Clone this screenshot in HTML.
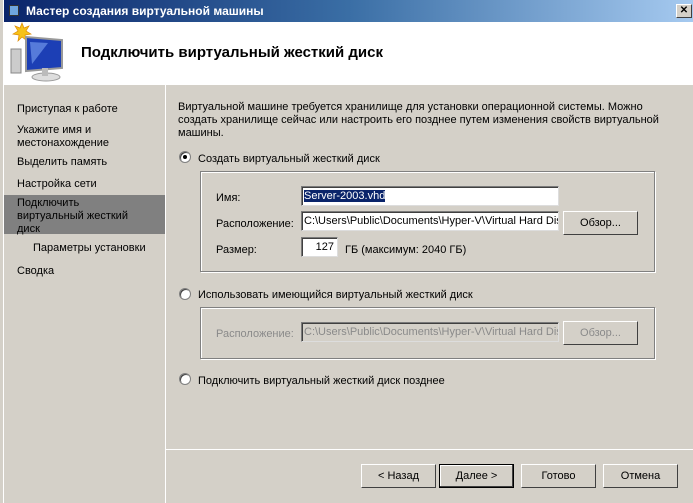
<!DOCTYPE html>
<html><head><meta charset="utf-8"><style>
*{margin:0;padding:0;box-sizing:border-box}
body{width:693px;height:503px;overflow:hidden;background:#d4d0c8;font-family:"Liberation Sans",sans-serif;font-size:11px;color:#000;position:relative}
.a{position:absolute}
.l{margin-top:2px}
.title{left:4px;top:0;width:689px;height:22px;background:linear-gradient(90deg,#0a246a 0%,#3a6ea5 50%,#a6caf0 100%);color:#fff;font-weight:bold;font-size:12px;line-height:22px;padding-left:22px}
.hdr{left:4px;top:22px;width:689px;height:63px;background:#fff}
.edge{left:3px;top:0;width:1px;height:503px;background:#fff}
.nav{left:4px;top:85px;width:161px;height:418px;background:#d4d0c8}
.vsep{left:165px;top:85px;width:1px;height:418px;background:#fff}
.hsep{left:166px;top:449px;width:527px;height:1px;background:#fff}
.nav .t{position:absolute;left:13px;line-height:13px;margin-top:2px}
.sel{position:absolute;left:0;top:110px;width:161px;height:39px;background:#808080}
.box{border:1px solid #808080;box-shadow:1px 1px 0 #fff inset,1px 1px 0 #fff}
.inp{background:#fff;border:1px solid #7a7a7a;border-right-color:#ddd;border-bottom-color:#ddd;height:20px;line-height:18px;padding-left:2px;white-space:nowrap;overflow:hidden;box-shadow:1px 1px 0 #404040 inset}
.btn{background:#d4d0c8;border:1px solid;border-color:#fff #404040 #404040 #fff;box-shadow:-1px -1px 0 #d4d0c8 inset,-1px -1px 0 #808080 inset;text-align:center;line-height:22px;height:24px}
.rad{width:12px;height:12px;border-radius:50%;background:#fff;border:1px solid #808080;box-shadow:1px 1px 0 #404040 inset}
.dis{color:#8a8a8a}
</style></head><body>
<div class="a edge"></div>
<div class="a title">Мастер создания виртуальной машины</div>
<div class="a" style="left:9px;top:5px;width:10px;height:11px;background:#6fa6e0;border:1px solid #333"></div>
<div class="a" style="left:676px;top:4px;width:16px;height:14px;background:#d4d0c8;border:1px solid #fff;border-right-color:#404040;border-bottom-color:#404040;font-size:10px;line-height:12px;text-align:center;font-weight:bold;color:#000">✕</div>
<div class="a hdr"></div>
<svg class="a" style="left:8px;top:22px" width="58" height="62" viewBox="0 0 58 62">
<polygon points="12,6 14,1 16,6 21,4 18,9 23,12 17,13 18,18 14,15 10,19 11,13 5,12 10,9 7,4" fill="#f6c21a" stroke="#e08a00" stroke-width=".7"/>
<rect x="3" y="27" width="10" height="24" fill="#ccc" stroke="#888"/>
<polygon points="18,15 54,18 54,46 18,49" fill="#1c3fb5" stroke="#999" stroke-width="2"/>
<polygon points="22,20 40,21 24,42" fill="#6f95ea" opacity=".7"/>
<ellipse cx="38" cy="55" rx="14" ry="4" fill="#ddd" stroke="#999"/>
<rect x="34" y="46" width="6" height="8" fill="#bbb"/>
</svg>
<div class="a" style="left:81px;top:44px;font-size:15px;font-weight:bold">Подключить виртуальный жесткий диск</div>
<div class="a nav">
<div class="sel"></div>
<div class="t" style="top:16px">Приступая к работе</div>
<div class="t" style="top:37px">Укажите имя и<br>местонахождение</div>
<div class="t" style="top:69px">Выделить память</div>
<div class="t" style="top:91px">Настройка сети</div>
<div class="t" style="top:110px">Подключить<br>виртуальный жесткий<br>диск</div>
<div class="t" style="top:155px;left:29px">Параметры установки</div>
<div class="t" style="top:178px">Сводка</div>
</div>
<div class="a vsep"></div>
<div class="a hsep"></div>
<div class="a l" style="left:178px;top:99px;width:500px;line-height:13px">Виртуальной машине требуется хранилище для установки операционной системы. Можно создать хранилище сейчас или настроить его позднее путем изменения свойств виртуальной машины.</div>
<div class="a rad" style="left:179px;top:151px"><div style="position:absolute;left:3px;top:3px;width:4px;height:4px;border-radius:50%;background:#000"></div></div>
<div class="a l" style="left:198px;top:151px">Создать виртуальный жесткий диск</div>
<div class="a box" style="left:200px;top:171px;width:455px;height:101px"></div>
<div class="a l" style="left:216px;top:190px">Имя:</div>
<div class="a inp" style="left:301px;top:186px;width:258px"><span style="background:#0a246a;color:#fff">Server-2003.vhd</span></div>
<div class="a l" style="left:216px;top:216px">Расположение:</div>
<div class="a inp" style="left:301px;top:211px;width:258px">C:\Users\Public\Documents\Hyper-V\Virtual Hard Disks</div>
<div class="a btn" style="left:563px;top:211px;width:75px">Обзор...</div>
<div class="a l" style="left:216px;top:242px">Размер:</div>
<div class="a inp" style="left:301px;top:237px;width:37px;text-align:right;padding-right:3px">127</div>
<div class="a l" style="left:345px;top:242px">ГБ (максимум: 2040 ГБ)</div>
<div class="a rad" style="left:179px;top:288px"></div>
<div class="a l" style="left:198px;top:287px">Использовать имеющийся виртуальный жесткий диск</div>
<div class="a box" style="left:200px;top:307px;width:455px;height:52px"></div>
<div class="a dis l" style="left:216px;top:326px">Расположение:</div>
<div class="a inp dis" style="left:301px;top:322px;width:258px;background:#d4d0c8">C:\Users\Public\Documents\Hyper-V\Virtual Hard Disks</div>
<div class="a btn dis" style="left:563px;top:321px;width:75px">Обзор...</div>
<div class="a rad" style="left:179px;top:373px"></div>
<div class="a l" style="left:198px;top:373px">Подключить виртуальный жесткий диск позднее</div>
<div class="a btn" style="left:361px;top:464px;width:75px">&lt; Назад</div>
<div class="a btn" style="left:439px;top:464px;width:75px;border:1px solid #000;box-shadow:-1px -1px 0 #404040 inset,1px 1px 0 #fff inset">Далее &gt;</div>
<div class="a btn" style="left:521px;top:464px;width:75px">Готово</div>
<div class="a btn" style="left:603px;top:464px;width:75px">Отмена</div>
</body></html>
